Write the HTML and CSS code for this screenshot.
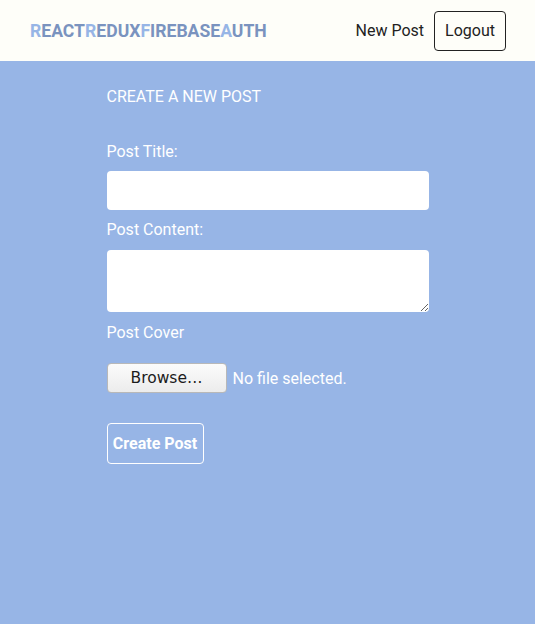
FILE: index.html
```html
<!DOCTYPE html>
<html>
<head>
<meta charset="utf-8">
<link rel="stylesheet" href="styles.css">
</head>
<body>
<header class="topbar">
  <div class="logo"><span class="lt">R</span>EACT<span class="lt">R</span>EDUX<span class="lt">F</span>IREBASE<span class="lt">A</span>UTH</div>
  <nav class="nav">
    <a class="nav-link">New Post</a>
    <button class="logout">Logout</button>
  </nav>
</header>
<main class="main">
  <form class="form">
    <h2 class="title">CREATE A NEW POST</h2>
    <label class="label label-first">Post Title:</label>
    <input class="field" type="text">
    <label class="label">Post Content:</label>
    <textarea class="field area"></textarea>
    <label class="label label-cover">Post Cover</label>
    <div class="file">
      <span class="browse">Browse…</span>
      <span class="nofile">No file selected.</span>
    </div>
    <button class="submit" type="button">Create Post</button>
  </form>
</main>
</body>
</html>
```
FILE: styles.css
```css
* { box-sizing: border-box; }
html, body { margin: 0; height: 100%; }
body {
  font-family: Roboto, "Liberation Sans", sans-serif;
  background: #97b5e6;
  color: #fff;
}
.topbar {
  height: 61px;
  background: #fefef9;
  display: flex;
  align-items: center;
  justify-content: space-between;
  padding: 0 29px 0 30px;
}
.logo {
  font-weight: 700;
  font-size: 17.6px;
  color: #7a93bf;
  letter-spacing: 0;
}
.lt { color: #97b5e6; }
.nav { display: flex; align-items: center; gap: 10px; }
.nav-link { color: #222; font-size: 16px; }
.logout {
  font-family: inherit;
  font-size: 16px;
  color: #222;
  background: transparent;
  border: 1px solid #222;
  border-radius: 4px;
  height: 40px;
  padding: 0 10px;
}
.main { display: flex; justify-content: center; }
.form {
  width: 322px;
  display: flex;
  flex-direction: column;
  align-items: flex-start;
  padding-top: 26px;
}
.title {
  margin: 0;
  font-size: 16px;
  font-weight: 400;
  line-height: 19px;
}
.label { font-size: 16px; line-height: 19px; margin: 10px 0 11px; }
.label-first { margin-top: 36px; margin-bottom: 10px; }
.label-cover { margin-top: 11px; margin-bottom: 12px; }
.field {
  width: 100%;
  height: 39px;
  border: none;
  border-radius: 4px;
  background: #fff;
  margin: 0;
  font-family: inherit;
}
.area { height: 62px; resize: vertical; display: block; }
.file { display: flex; align-items: center; gap: 6px; margin-top: 9px; }
.browse {
  width: 120px;
  height: 30px;
  border: 1px solid #b8b8b8;
  border-radius: 4px;
  background: linear-gradient(#fbfbfb, #ececec);
  color: #1c1c1c;
  font-family: "DejaVu Sans", sans-serif;
  font-size: 15.5px;
  display: flex;
  align-items: center;
  justify-content: center;
}
.nofile { font-size: 16px; }
.submit {
  margin-top: 30px;
  font-family: inherit;
  font-weight: 700;
  font-size: 16px;
  color: #fff;
  background: transparent;
  border: 1px solid #fff;
  border-radius: 4px;
  height: 41px;
  width: 97px;
  padding: 0;
}
```
